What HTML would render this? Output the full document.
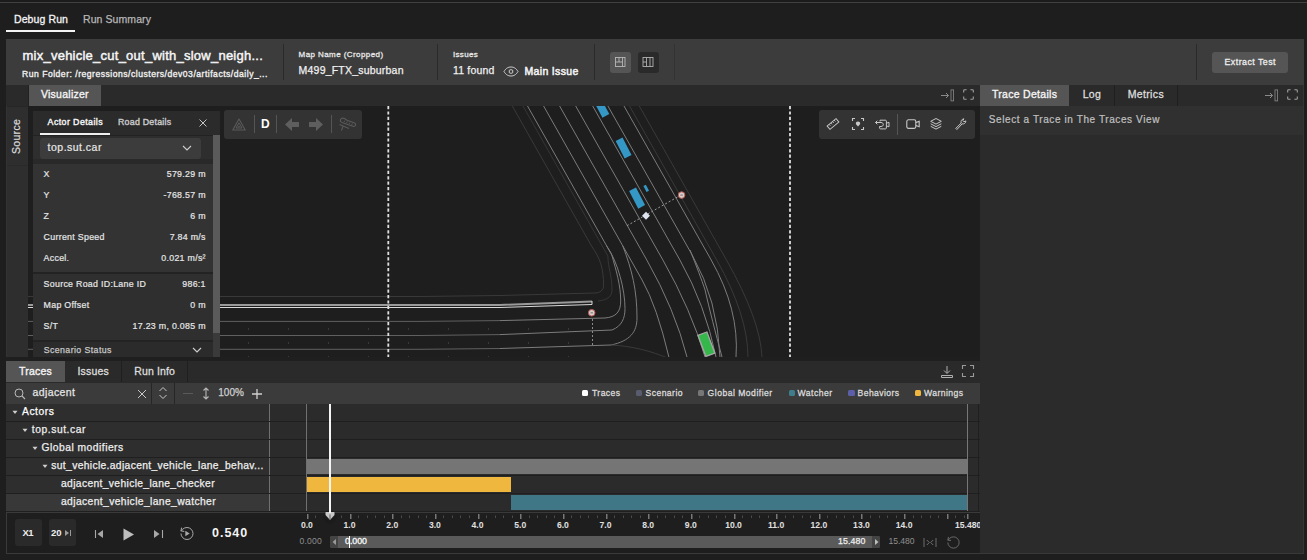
<!DOCTYPE html>
<html><head><meta charset="utf-8"><style>
html,body{margin:0;padding:0;width:1307px;height:560px;overflow:hidden;background:#1e1e1e;}
body{position:relative;font-family:"Liberation Sans",sans-serif;}
div{position:absolute;box-sizing:border-box;}
.t{white-space:nowrap;}
svg{position:absolute;overflow:visible;}
</style></head><body>
<div style="left:0px;top:0px;width:1307px;height:2px;background:#1c1c1c;"></div>
<div style="left:0px;top:2px;width:1307px;height:1px;background:#404040;"></div>
<div class="t" style="left:14px;top:14.11px;font-size:10.5px;line-height:10.5px;color:#f4f4f4;font-weight:400;letter-spacing:0.098px;-webkit-text-stroke:0.3px #f4f4f4;">Debug Run</div>
<div class="t" style="left:83px;top:14.11px;font-size:10.5px;line-height:10.5px;color:#b8b8b8;font-weight:400;letter-spacing:0.082px;-webkit-text-stroke:0.25px #b8b8b8;">Run Summary</div>
<div style="left:6px;top:30px;width:69px;height:1.5px;background:#f4f4f4;"></div>
<div style="left:6px;top:39px;width:1298px;height:46px;background:#3c3c3c;"></div>
<div class="t" style="left:22.5px;top:48.99px;font-size:13px;line-height:13px;color:#f6f6f6;font-weight:400;letter-spacing:0.244px;-webkit-text-stroke:0.45px #f6f6f6;">mix_vehicle_cut_out_with_slow_neigh...</div>
<div class="t" style="left:22px;top:69.52px;font-size:8.6px;line-height:8.6px;color:#f0f0f0;font-weight:400;letter-spacing:0.500px;-webkit-text-stroke:0.35px #f0f0f0;">Run Folder: /regressions/clusters/dev03/artifacts/daily_...</div>
<div style="left:283px;top:44px;width:1px;height:36px;background:#2a2a2a;"></div>
<div class="t" style="left:298.6px;top:50.53px;font-size:8px;line-height:8px;color:#e6e6e6;font-weight:400;letter-spacing:0.419px;-webkit-text-stroke:0.3px #e6e6e6;">Map Name (Cropped)</div>
<div class="t" style="left:298.6px;top:64.51px;font-size:10.5px;line-height:10.5px;color:#f0f0f0;font-weight:400;letter-spacing:0.208px;-webkit-text-stroke:0.25px #f0f0f0;">M499_FTX_suburban</div>
<div style="left:437px;top:44px;width:1px;height:36px;background:#2a2a2a;"></div>
<div class="t" style="left:453px;top:51.03px;font-size:8px;line-height:8px;color:#e6e6e6;font-weight:400;letter-spacing:0.313px;-webkit-text-stroke:0.3px #e6e6e6;">Issues</div>
<div class="t" style="left:453px;top:65.11px;font-size:10.5px;line-height:10.5px;color:#f0f0f0;font-weight:400;letter-spacing:0.176px;-webkit-text-stroke:0.25px #f0f0f0;">11 found</div>
<div class="t" style="left:524.5px;top:66.01px;font-size:10.5px;line-height:10.5px;color:#f4f4f4;font-weight:400;letter-spacing:0.333px;-webkit-text-stroke:0.5px #f4f4f4;">Main Issue</div>
<div style="left:594px;top:44px;width:1px;height:36px;background:#2a2a2a;"></div>
<div style="left:610px;top:52px;width:21px;height:21px;background:#555555;border-radius:3px;"></div>
<div style="left:638px;top:52px;width:21px;height:21px;background:#2a2a2a;border-radius:3px;"></div>
<div style="left:674px;top:44px;width:1px;height:36px;background:#333333;"></div>
<svg style="left:503px;top:66px" width="16" height="11" viewBox="0 0 16 11"><path d="M1 5.5C3 2 5.5 1 8 1C10.5 1 13 2 15 5.5C13 9 10.5 10 8 10C5.5 10 3 9 1 5.5Z" stroke="#d0d0d0" stroke-width="1" fill="none"/><rect x="6.3" y="3.8" width="3.4" height="3.4" rx="0.8" stroke="#d0d0d0" stroke-width="1" fill="none"/></svg>
<svg style="left:614px;top:57px" width="12" height="11" viewBox="0 0 12 11"><rect x="1.5" y="0.5" width="9.5" height="9" stroke="#b8b8b8" stroke-width="0.9" fill="none"/><path d="M8.5 0.5V9.5M1.5 5H8.5M5 0.5V5" stroke="#b8b8b8" stroke-width="0.9" fill="none"/></svg>
<svg style="left:642px;top:57px" width="12" height="11" viewBox="0 0 12 11"><rect x="1" y="0.5" width="10" height="9" stroke="#b0b0b0" stroke-width="0.9" fill="none"/><path d="M4.5 0.5V9.5M8 0.5V9.5M1 5H4.5" stroke="#b0b0b0" stroke-width="0.9" fill="none"/></svg>
<div style="left:1196px;top:44px;width:1px;height:36px;background:#2a2a2a;"></div>
<div style="left:1212px;top:52px;width:76px;height:21px;background:#555555;border-radius:3px;"></div>
<div class="t" style="left:1224.5px;top:57.55px;font-size:8.8px;line-height:8.8px;color:#eeeeee;font-weight:400;letter-spacing:0.474px;-webkit-text-stroke:0.3px #eeeeee;">Extract Test</div>
<div style="left:6px;top:85px;width:1298px;height:468px;background:#2a2a2a;"></div>
<div style="left:6px;top:106px;width:22px;height:251px;background:#2e2e2e;"></div>
<div style="left:28px;top:85px;width:1px;height:272px;background:#222;"></div>
<div style="left:29px;top:85px;width:72px;height:21px;background:#555555;"></div>
<div class="t" style="left:40.9px;top:89.11px;font-size:10.5px;line-height:10.5px;color:#f4f4f4;font-weight:400;letter-spacing:0.267px;-webkit-text-stroke:0.35px #f4f4f4;">Visualizer</div>
<div style="left:28px;top:106px;width:952px;height:251px;background:#1e1e1e;"></div>
<div style="left:980px;top:85px;width:323px;height:21px;background:#2a2a2a;"></div>
<div style="left:980px;top:85px;width:89px;height:21px;background:#555555;"></div>
<div style="left:1114px;top:85px;width:1px;height:21px;background:#1f1f1f;"></div>
<div style="left:1177px;top:85px;width:1px;height:21px;background:#1f1f1f;"></div>
<div class="t" style="left:992px;top:88.91px;font-size:10.5px;line-height:10.5px;color:#f4f4f4;font-weight:400;letter-spacing:0.288px;-webkit-text-stroke:0.35px #f4f4f4;">Trace Details</div>
<div class="t" style="left:1082.7px;top:88.91px;font-size:10.5px;line-height:10.5px;color:#dddddd;font-weight:400;letter-spacing:0.327px;-webkit-text-stroke:0.3px #dddddd;">Log</div>
<div class="t" style="left:1127.7px;top:88.91px;font-size:10.5px;line-height:10.5px;color:#dddddd;font-weight:400;letter-spacing:0.352px;-webkit-text-stroke:0.3px #dddddd;">Metrics</div>
<div style="left:980px;top:106px;width:323px;height:447px;background:#2b2b2b;"></div>
<div style="left:980px;top:106px;width:323px;height:29px;background:#303030;"></div>
<div class="t" style="left:988.8px;top:114.93px;font-size:10px;line-height:10px;color:#c0c0c0;font-weight:400;letter-spacing:0.601px;-webkit-text-stroke:0.2px #c0c0c0;">Select a Trace in The Traces View</div>
<div style="left:975px;top:106px;width:5px;height:447px;background:#1e1e1e;"></div>
<svg style="left:0;top:0" width="1307" height="560"><defs><clipPath id="mc"><rect x="28" y="106" width="947" height="251"/></clipPath></defs><g clip-path="url(#mc)"><path d="M559.6 106L646.8 260Q675.1 310 687 357" stroke="#7c7c7c" stroke-width="1" fill="none" /><path d="M575.7 106L662.9 260Q691.2 310 705 357" stroke="#7c7c7c" stroke-width="1" fill="none" /><path d="M592.7 106L679.9 260Q705.3 305 716 357" stroke="#7c7c7c" stroke-width="1" fill="none" /><path d="M607.9 106L692.2 255Q717.7 300 720 357" stroke="#7c7c7c" stroke-width="1" fill="none" /><path d="M690 250Q700 275 704.8 289Q712 320 722 357" stroke="#7c7c7c" stroke-width="1" fill="none" /><path d="M624 106L711.2 260Q739.5 310 736 357" stroke="#7c7c7c" stroke-width="1" fill="none" /><path d="M629.5 106L716.7 260Q747.8 315 748 357" stroke="#3c3c3c" stroke-width="0.9" fill="none" /><path d="M639.3 106L726.5 260Q760.4 320 762 357" stroke="#3c3c3c" stroke-width="0.9" fill="none" /><path d="M543.6 106L642.1 280Q656.8 306 668.9 357" stroke="#7c7c7c" stroke-width="1" fill="none" /><path d="M527.5 106L611.8 255C616 270 620.7 285 620.7 301C620.7 312 616 317 605 318L500 320.6" stroke="#7c7c7c" stroke-width="1" fill="none" /><path d="M500 320.6L420 321.4L28 321.4" stroke="#606060" stroke-width="1" fill="none" /><path d="M606.7 246C618 262 625 290 625 308.6C625 318 622 326 612 330L500 334.6" stroke="#7c7c7c" stroke-width="1" fill="none" /><path d="M500 334.6L420 335.5L28 335.5" stroke="#606060" stroke-width="1" fill="none" /><path d="M622.8 246C632 270 637 290 637 318C637 332 630 341 611 345L500 348.5" stroke="#7c7c7c" stroke-width="1" fill="none" /><path d="M500 348.5L420 349.3L28 349.3" stroke="#606060" stroke-width="1" fill="none" /><path d="M512.3 106L591.5 246C600 258 603.6 268 603.6 285.7C603.6 290 600 293 595 293L500 295.5L420 296.5L28 296.5" stroke="#3c3c3c" stroke-width="0.9" fill="none" /><path d="M523 106L607.9 256C608 268 612 275 612 290C612 296 608 300 598 301" stroke="#3c3c3c" stroke-width="0.8" fill="none" /><path d="M611 345C630 346 650 350 672 360" stroke="#3c3c3c" stroke-width="0.9" fill="none" /><path d="M28 305H500L592 301.5" stroke="#9a9a9a" stroke-width="2" fill="none"/><path d="M28 307.5H500L592 304.5V301" stroke="#d8d8d8" stroke-width="1" fill="none"/><rect x="248" y="328.5" width="1" height="1" fill="#555"/><rect x="288" y="328.5" width="1" height="1" fill="#555"/><rect x="328" y="328.5" width="1" height="1" fill="#555"/><rect x="368" y="328.5" width="1" height="1" fill="#555"/><rect x="408" y="328.5" width="1" height="1" fill="#555"/><rect x="448" y="328.5" width="1" height="1" fill="#555"/><rect x="488" y="328.5" width="1" height="1" fill="#555"/><rect x="528" y="328.5" width="1" height="1" fill="#555"/><rect x="568" y="328.5" width="1" height="1" fill="#555"/><rect x="248" y="342.5" width="1" height="1" fill="#555"/><rect x="288" y="342.5" width="1" height="1" fill="#555"/><rect x="328" y="342.5" width="1" height="1" fill="#555"/><rect x="368" y="342.5" width="1" height="1" fill="#555"/><rect x="408" y="342.5" width="1" height="1" fill="#555"/><rect x="448" y="342.5" width="1" height="1" fill="#555"/><rect x="488" y="342.5" width="1" height="1" fill="#555"/><rect x="528" y="342.5" width="1" height="1" fill="#555"/><rect x="568" y="342.5" width="1" height="1" fill="#555"/><rect x="248" y="356.5" width="1" height="1" fill="#555"/><rect x="288" y="356.5" width="1" height="1" fill="#555"/><rect x="328" y="356.5" width="1" height="1" fill="#555"/><rect x="368" y="356.5" width="1" height="1" fill="#555"/><rect x="408" y="356.5" width="1" height="1" fill="#555"/><rect x="448" y="356.5" width="1" height="1" fill="#555"/><rect x="488" y="356.5" width="1" height="1" fill="#555"/><rect x="528" y="356.5" width="1" height="1" fill="#555"/><rect x="568" y="356.5" width="1" height="1" fill="#555"/><path d="M388.3 106V357" stroke="#e0e0e0" stroke-width="1.8" fill="none" stroke-dasharray="3.2 2.2"/><path d="M790 106V357" stroke="#e0e0e0" stroke-width="1.8" fill="none" stroke-dasharray="3.2 2.2"/><path d="M592.5 319V346" stroke="#8a8a8a" stroke-width="1" fill="none" stroke-dasharray="2 2"/><path d="M627 225.7L681 195" stroke="#9a9a9a" stroke-width="1" fill="none" stroke-dasharray="2 2"/><circle cx="681.6" cy="195.1" r="3.3" fill="#d8cccc" stroke="#b5584e" stroke-width="1"/><rect x="680.4" y="194.5" width="2.4" height="1.2" fill="#8a7a7a"/><circle cx="591.7" cy="312.8" r="3.3" fill="#d8cccc" stroke="#b5584e" stroke-width="1"/><rect x="590.5" y="312.2" width="2.4" height="1.2" fill="#8a7a7a"/><rect x="643.2" y="212.9" width="5.6" height="5.6" fill="#dfe5f0" transform="rotate(45 646 215.7)"/><rect x="597.45" y="97.55" width="7.7" height="19.5" fill="#3597c6" transform="rotate(-28 601.3 107.3)"/><rect x="619.75" y="138.25" width="7.7" height="19.5" fill="#3597c6" transform="rotate(-27.4 623.6 148)"/><rect x="633.25" y="188.20" width="7.7" height="19.8" fill="#3597c6" transform="rotate(-27.4 637.1 198.1)"/><rect x="644.80" y="185.00" width="2.8" height="6.8" fill="#3597c6" transform="rotate(-27.4 646.2 188.4)"/><rect x="701.60" y="332.95" width="9.6" height="22.5" fill="#35b74b" stroke="#a8a8a8" stroke-width="1.3" transform="rotate(-20.7 706.4 344.2)"/></g></svg>
<div class="t" style="left:2px;top:134px;width:28px;height:12px;transform:rotate(-90deg);font-size:10.5px;line-height:12px;color:#d6d6d6;text-align:center;letter-spacing:0.3px;-webkit-text-stroke:0.25px #d6d6d6;">Source</div>
<div style="left:6px;top:106px;width:22px;height:1px;background:#262626;"></div>
<div style="left:6px;top:165px;width:22px;height:1px;background:#292929;"></div>
<div style="left:6px;top:106px;width:1px;height:251px;background:#333333;"></div>
<div style="left:33px;top:111px;width:187px;height:246px;background:#2c2c2c;"></div>
<div style="left:33px;top:111px;width:187px;height:24px;background:#2b2b2b;"></div>
<div style="left:33px;top:135px;width:180px;height:1px;background:#222222;"></div>
<div class="t" style="left:47.6px;top:117.55px;font-size:8.8px;line-height:8.8px;color:#f4f4f4;font-weight:400;letter-spacing:0.424px;-webkit-text-stroke:0.4px #f4f4f4;">Actor Details</div>
<div class="t" style="left:118px;top:117.55px;font-size:8.8px;line-height:8.8px;color:#c8c8c8;font-weight:400;letter-spacing:0.252px;-webkit-text-stroke:0.4px #c8c8c8;">Road Details</div>
<div style="left:40px;top:133px;width:70px;height:2px;background:#f0f0f0;"></div>
<svg style="left:198px;top:118px" width="10" height="10" viewBox="0 0 10 10"><path d="M1.5 1.5L8.5 8.5M8.5 1.5L1.5 8.5" stroke="#c4c4c4" stroke-width="1" fill="none"/></svg>
<div style="left:213px;top:135px;width:7px;height:222px;background:#3a3a3a;"></div>
<div style="left:213px;top:135px;width:7px;height:198px;background:#5a5a5a;"></div>
<div style="left:33px;top:136px;width:180px;height:23px;background:#2e2e2e;"></div>
<div style="left:40px;top:138px;width:161px;height:21px;background:#3c3c3c;border-radius:3px;"></div>
<div class="t" style="left:47.6px;top:141.81px;font-size:10.5px;line-height:10.5px;color:#e8e8e8;font-weight:400;letter-spacing:0.480px;-webkit-text-stroke:0.2px #e8e8e8;">top.sut.car</div>
<svg style="left:182px;top:145px" width="10" height="6" viewBox="0 0 10 6"><path d="M1 1L5 5L9 1" stroke="#cfcfcf" stroke-width="1.1" fill="none"/></svg>
<div style="left:33px;top:159px;width:180px;height:5px;background:#292929;"></div>
<div style="left:33px;top:164px;width:180px;height:109px;background:#333333;"></div>
<div style="left:33px;top:272px;width:180px;height:2px;background:#232323;"></div>
<div style="left:33px;top:274px;width:180px;height:66px;background:#2f2f2f;"></div>
<div style="left:33px;top:340px;width:180px;height:2px;background:#232323;"></div>
<div style="left:33px;top:342px;width:180px;height:15px;background:#2b2b2b;"></div>
<div class="t" style="left:43.6px;top:169.55px;font-size:8.8px;line-height:8.8px;color:#e6e6e6;font-weight:400;letter-spacing:0.000px;letter-spacing:0.3px;-webkit-text-stroke:0.2px #e6e6e6;">X</div>
<div class="t" style="right:1101.2px;top:169.55px;font-size:8.8px;line-height:8.8px;color:#e6e6e6;font-weight:400;letter-spacing:0.000px;letter-spacing:0.3px;-webkit-text-stroke:0.2px #e6e6e6;">579.29 m</div>
<div class="t" style="left:43.6px;top:190.55px;font-size:8.8px;line-height:8.8px;color:#e6e6e6;font-weight:400;letter-spacing:0.000px;letter-spacing:0.3px;-webkit-text-stroke:0.2px #e6e6e6;">Y</div>
<div class="t" style="right:1101.2px;top:190.55px;font-size:8.8px;line-height:8.8px;color:#e6e6e6;font-weight:400;letter-spacing:0.000px;letter-spacing:0.3px;-webkit-text-stroke:0.2px #e6e6e6;">-768.57 m</div>
<div class="t" style="left:43.6px;top:211.55px;font-size:8.8px;line-height:8.8px;color:#e6e6e6;font-weight:400;letter-spacing:0.000px;letter-spacing:0.3px;-webkit-text-stroke:0.2px #e6e6e6;">Z</div>
<div class="t" style="right:1101.2px;top:211.55px;font-size:8.8px;line-height:8.8px;color:#e6e6e6;font-weight:400;letter-spacing:0.000px;letter-spacing:0.3px;-webkit-text-stroke:0.2px #e6e6e6;">6 m</div>
<div class="t" style="left:43.6px;top:232.55px;font-size:8.8px;line-height:8.8px;color:#e6e6e6;font-weight:400;letter-spacing:0.000px;letter-spacing:0.3px;-webkit-text-stroke:0.2px #e6e6e6;">Current Speed</div>
<div class="t" style="right:1101.2px;top:232.55px;font-size:8.8px;line-height:8.8px;color:#e6e6e6;font-weight:400;letter-spacing:0.000px;letter-spacing:0.3px;-webkit-text-stroke:0.2px #e6e6e6;">7.84 m/s</div>
<div class="t" style="left:43.6px;top:253.55px;font-size:8.8px;line-height:8.8px;color:#e6e6e6;font-weight:400;letter-spacing:0.000px;letter-spacing:0.3px;-webkit-text-stroke:0.2px #e6e6e6;">Accel.</div>
<div class="t" style="right:1101.2px;top:253.55px;font-size:8.8px;line-height:8.8px;color:#e6e6e6;font-weight:400;letter-spacing:0.000px;letter-spacing:0.3px;-webkit-text-stroke:0.2px #e6e6e6;">0.021 m/s²</div>
<div class="t" style="left:43.6px;top:279.55px;font-size:8.8px;line-height:8.8px;color:#e6e6e6;font-weight:400;letter-spacing:0.000px;letter-spacing:0.3px;-webkit-text-stroke:0.2px #e6e6e6;">Source Road ID:Lane ID</div>
<div class="t" style="right:1101.2px;top:279.55px;font-size:8.8px;line-height:8.8px;color:#e6e6e6;font-weight:400;letter-spacing:0.000px;letter-spacing:0.3px;-webkit-text-stroke:0.2px #e6e6e6;">986:1</div>
<div class="t" style="left:43.6px;top:300.55px;font-size:8.8px;line-height:8.8px;color:#e6e6e6;font-weight:400;letter-spacing:0.000px;letter-spacing:0.3px;-webkit-text-stroke:0.2px #e6e6e6;">Map Offset</div>
<div class="t" style="right:1101.2px;top:300.55px;font-size:8.8px;line-height:8.8px;color:#e6e6e6;font-weight:400;letter-spacing:0.000px;letter-spacing:0.3px;-webkit-text-stroke:0.2px #e6e6e6;">0 m</div>
<div class="t" style="left:43.6px;top:321.85px;font-size:8.8px;line-height:8.8px;color:#e6e6e6;font-weight:400;letter-spacing:0.000px;letter-spacing:0.3px;-webkit-text-stroke:0.2px #e6e6e6;">S/T</div>
<div class="t" style="right:1101.2px;top:321.85px;font-size:8.8px;line-height:8.8px;color:#e6e6e6;font-weight:400;letter-spacing:0.000px;letter-spacing:0.3px;-webkit-text-stroke:0.2px #e6e6e6;">17.23 m, 0.085 m</div>
<div class="t" style="left:43.7px;top:345.55px;font-size:8.8px;line-height:8.8px;color:#c8c8c8;font-weight:400;letter-spacing:0.405px;-webkit-text-stroke:0.25px #c8c8c8;">Scenario Status</div>
<svg style="left:192px;top:347px" width="10" height="6" viewBox="0 0 10 6"><path d="M1 1L5 5L9 1" stroke="#cfcfcf" stroke-width="1.1" fill="none"/></svg>
<div style="left:224px;top:110px;width:138px;height:29px;background:#333333;border-radius:3px;"></div>
<svg style="left:231px;top:117px" width="16" height="15" viewBox="0 0 16 15"><path d="M8 2L14.2 13H1.8Z" stroke="#5a5a5a" stroke-width="1.1" fill="none" stroke-linejoin="round"/><path d="M8 5.8L11 11H5Z" stroke="#5a5a5a" stroke-width="1" fill="none"/><path d="M8 8.2L9.2 10.2H6.8Z" fill="#5a5a5a"/></svg>
<div style="left:254px;top:115px;width:1px;height:18px;background:#555;"></div>
<div class="t" style="left:260.9px;top:118.34px;font-size:12px;line-height:12px;color:#ffffff;font-weight:700;letter-spacing:0.000px;">D</div>
<div style="left:276px;top:115px;width:1px;height:18px;background:#555;"></div>
<svg style="left:284px;top:117px" width="40" height="15" viewBox="0 0 40 15"><path d="M1 7.5L8 1V5H15V10H8V14Z" fill="#5e5e5e"/><path d="M39 7.5L32 1V5H25V10H32V14Z" fill="#5e5e5e"/></svg>
<div style="left:331px;top:115px;width:1px;height:18px;background:#555;"></div>
<svg style="left:338px;top:116px" width="20" height="17" viewBox="0 0 20 17"><path d="M2.5 3.5C3.5 2 5 1.8 6.5 2.6L9 4.2L15.5 6.5C17.5 7.2 18 8.5 17.5 9.5C17 10.3 15.5 10.5 14 10L4 6.5C2.8 6 2 5 2.5 3.5Z" stroke="#5a5a5a" stroke-width="1.1" fill="none"/><path d="M7 4.5L6 6M9.5 5.5L8.5 7M12 6.5L11 8M14.5 7.5L13.5 9" stroke="#5a5a5a" stroke-width="0.9"/><path d="M1.5 8.5L11 12.5M5 10L3.5 14.5" stroke="#5a5a5a" stroke-width="1.1" fill="none"/></svg>
<div style="left:819px;top:110px;width:156px;height:29px;background:#333333;border-radius:3px;"></div>
<div style="left:897px;top:114px;width:1px;height:21px;background:#555;"></div>
<svg style="left:826px;top:117px" width="14" height="14" viewBox="0 0 14 14"><g transform="rotate(-40 7 7)"><rect x="1.2" y="4.8" width="11.6" height="4.4" stroke="#c8c8c8" stroke-width="1" fill="none"/><path d="M3.8 4.8V6.6M6 4.8V6.6M8.2 4.8V6.6M10.4 4.8V6.6" stroke="#c8c8c8" stroke-width="0.9"/></g></svg>
<svg style="left:851px;top:117px" width="14" height="14" viewBox="0 0 14 14"><path d="M1.5 4V1.5H4M10 1.5H12.5V4M12.5 10V12.5H10M4 12.5H1.5V10" stroke="#c8c8c8" stroke-width="1.1" fill="none"/><path d="M7 4.6C8.3 4.6 9.2 5.5 9.2 6.6C9.2 7.8 7.8 8.6 7 9.4C6.2 8.6 4.8 7.8 4.8 6.6C4.8 5.5 5.7 4.6 7 4.6Z" fill="#c8c8c8"/></svg>
<svg style="left:874px;top:117px" width="16" height="14" viewBox="0 0 16 14"><path d="M6 4.5V3.2H11.5C12 3.2 12.4 3.6 12.4 4.1V11C12.4 11.5 12 11.9 11.5 11.9H6.5C6 11.9 5.6 11.5 5.6 11V9.5" stroke="#c8c8c8" stroke-width="1" fill="none"/><path d="M12.4 6.2L15 5.3V9.8L12.4 8.9" stroke="#c8c8c8" stroke-width="1" fill="none"/><path d="M1.5 5.5H7C8.5 5.5 9.3 6.4 9.3 7.5C9.3 8.6 8.5 9.5 7 9.5H5.5M3.3 3.7L1.5 5.5L3.3 7.3" stroke="#c8c8c8" stroke-width="1" fill="none"/></svg>
<svg style="left:905px;top:117px" width="16" height="14" viewBox="0 0 16 14"><rect x="1.8" y="2.8" width="9" height="8.6" rx="1.6" stroke="#c8c8c8" stroke-width="1.1" fill="none"/><path d="M10.8 5.6L14.2 4.4V9.8L10.8 8.6" stroke="#c8c8c8" stroke-width="1.1" fill="none"/></svg>
<svg style="left:929px;top:117px" width="14" height="14" viewBox="0 0 14 14"><path d="M7 1.5L12.3 4.3L7 7.1L1.7 4.3Z" stroke="#c8c8c8" stroke-width="1" fill="none"/><path d="M1.7 6.8L7 9.6L12.3 6.8M1.7 9.3L7 12.1L12.3 9.3" stroke="#c8c8c8" stroke-width="1" fill="none"/></svg>
<svg style="left:954px;top:117px" width="14" height="14" viewBox="0 0 14 14"><path d="M1.8 11.4L7.2 6C6.6 4.3 7.6 2 9.9 1.8L8.8 3.6L9.9 4.8L11.9 3.9C11.9 6 10.1 7.3 8.1 6.9L2.9 12.5Z" stroke="#c8c8c8" stroke-width="1" fill="none" stroke-linejoin="round"/></svg>
<svg style="left:940px;top:89px" width="14" height="13" viewBox="0 0 14 13"><path d="M1 6.5H8.5M6 4L8.5 6.5L6 9" stroke="#8a8a8a" stroke-width="1" fill="none"/><rect x="11" y="0.9" width="2.6" height="11" stroke="#8a8a8a" stroke-width="0.8" fill="none"/></svg>
<svg style="left:963px;top:89px" width="12" height="12" viewBox="0 0 12 12"><path d="M0.7 3.6V1.6Q0.7 0.7 1.6 0.7H3.6M7.4 0.7H9.4Q10.3 0.7 10.3 1.6V3.6M10.3 7.4V9.4Q10.3 10.3 9.4 10.3H7.4M3.6 10.3H1.6Q0.7 10.3 0.7 9.4V7.4" stroke="#a0a0a0" stroke-width="1.1" fill="none"/></svg>
<svg style="left:1264px;top:89px" width="14" height="13" viewBox="0 0 14 13"><path d="M1 6.5H8.5M6 4L8.5 6.5L6 9" stroke="#8a8a8a" stroke-width="1" fill="none"/><rect x="11" y="0.9" width="2.6" height="11" stroke="#8a8a8a" stroke-width="0.8" fill="none"/></svg>
<svg style="left:1287px;top:89px" width="12" height="12" viewBox="0 0 12 12"><path d="M0.7 3.6V1.6Q0.7 0.7 1.6 0.7H3.6M7.4 0.7H9.4Q10.3 0.7 10.3 1.6V3.6M10.3 7.4V9.4Q10.3 10.3 9.4 10.3H7.4M3.6 10.3H1.6Q0.7 10.3 0.7 9.4V7.4" stroke="#a0a0a0" stroke-width="1.1" fill="none"/></svg>
<div style="left:6px;top:357px;width:974px;height:4px;background:#1f1f1f;"></div>
<div style="left:6px;top:361px;width:1px;height:192px;background:#353535;"></div>
<div style="left:6px;top:361px;width:974px;height:22px;background:#2a2a2a;"></div>
<div style="left:6px;top:361px;width:59px;height:21px;background:#555555;"></div>
<div style="left:121px;top:361px;width:1px;height:21px;background:#1f1f1f;"></div>
<div style="left:187px;top:361px;width:1px;height:21px;background:#1f1f1f;"></div>
<div class="t" style="left:19px;top:366.11px;font-size:10.5px;line-height:10.5px;color:#f4f4f4;font-weight:400;letter-spacing:0.217px;-webkit-text-stroke:0.35px #f4f4f4;">Traces</div>
<div class="t" style="left:77.4px;top:366.11px;font-size:10.5px;line-height:10.5px;color:#dddddd;font-weight:400;letter-spacing:0.209px;-webkit-text-stroke:0.3px #dddddd;">Issues</div>
<div class="t" style="left:134.2px;top:366.11px;font-size:10.5px;line-height:10.5px;color:#dddddd;font-weight:400;letter-spacing:0.138px;-webkit-text-stroke:0.3px #dddddd;">Run Info</div>
<svg style="left:940px;top:365px" width="14" height="13" viewBox="0 0 14 13"><path d="M7 1V8M4 5.5L7 8.5L10 5.5M1.5 10.5H12.5V12.5H1.5Z" stroke="#b0b0b0" stroke-width="1" fill="none"/></svg>
<svg style="left:962px;top:365px" width="12" height="12" viewBox="0 0 12 12"><path d="M0.5 4V0.5H4M8 0.5H11.5V4M11.5 8V11.5H8M4 11.5H0.5V8" stroke="#9a9a9a" stroke-width="1.1" fill="none"/></svg>
<div style="left:6px;top:383px;width:974px;height:21px;background:#3b3b3b;"></div>
<div style="left:151px;top:383px;width:1px;height:21px;background:#262626;"></div>
<div style="left:174px;top:383px;width:1px;height:21px;background:#262626;"></div>
<svg style="left:14px;top:388px" width="12" height="12" viewBox="0 0 12 12"><circle cx="5" cy="5" r="4" stroke="#b8b8b8" stroke-width="1" fill="none"/><path d="M8 8L11 11" stroke="#b8b8b8" stroke-width="1.1"/></svg>
<div class="t" style="left:32.6px;top:387.11px;font-size:10.5px;line-height:10.5px;color:#e6e6e6;font-weight:400;letter-spacing:0.375px;-webkit-text-stroke:0.25px #e6e6e6;">adjacent</div>
<svg style="left:137px;top:389px" width="10" height="10" viewBox="0 0 10 10"><path d="M1 1L9 9M9 1L1 9" stroke="#c8c8c8" stroke-width="1" fill="none"/></svg>
<svg style="left:158px;top:386px" width="10" height="14" viewBox="0 0 10 14"><path d="M1.5 5L5 1.5L8.5 5M1.5 9L5 12.5L8.5 9" stroke="#c8c8c8" stroke-width="1" fill="none"/></svg>
<div style="left:183px;top:393px;width:10px;height:1px;background:#5a5a5a;"></div>
<svg style="left:202px;top:387px" width="8" height="13" viewBox="0 0 8 13"><path d="M4 1V12M1.5 3.5L4 1L6.5 3.5M1.5 9.5L4 12L6.5 9.5" stroke="#b8b8b8" stroke-width="1.1" fill="none"/></svg>
<div class="t" style="left:218.2px;top:387.53px;font-size:10px;line-height:10px;color:#cfcfcf;font-weight:400;letter-spacing:0.056px;-webkit-text-stroke:0.25px #cfcfcf;">100%</div>
<svg style="left:251px;top:388px" width="12" height="12" viewBox="0 0 12 12"><path d="M6 1V11M1 6H11" stroke="#d0d0d0" stroke-width="1.3"/></svg>
<div style="left:582px;top:389.6px;width:6.3px;height:6.3px;background:#ffffff;border-radius:1.5px;"></div>
<div class="t" style="left:592px;top:389.02px;font-size:8.6px;line-height:8.6px;color:#dadada;font-weight:400;letter-spacing:0.423px;-webkit-text-stroke:0.3px #dadada;">Traces</div>
<div style="left:636px;top:389.6px;width:6.3px;height:6.3px;background:#585c6e;border-radius:1.5px;"></div>
<div class="t" style="left:645.5px;top:389.02px;font-size:8.6px;line-height:8.6px;color:#dadada;font-weight:400;letter-spacing:0.445px;-webkit-text-stroke:0.3px #dadada;">Scenario</div>
<div style="left:698px;top:389.6px;width:6.3px;height:6.3px;background:#777777;border-radius:1.5px;"></div>
<div class="t" style="left:707.6px;top:389.02px;font-size:8.6px;line-height:8.6px;color:#dadada;font-weight:400;letter-spacing:0.484px;-webkit-text-stroke:0.3px #dadada;">Global Modifier</div>
<div style="left:788.5px;top:389.6px;width:6.3px;height:6.3px;background:#3f7d8c;border-radius:1.5px;"></div>
<div class="t" style="left:797.5px;top:389.02px;font-size:8.6px;line-height:8.6px;color:#dadada;font-weight:400;letter-spacing:0.486px;-webkit-text-stroke:0.3px #dadada;">Watcher</div>
<div style="left:848.3px;top:389.6px;width:6.3px;height:6.3px;background:#5c5fa8;border-radius:1.5px;"></div>
<div class="t" style="left:857.6px;top:389.02px;font-size:8.6px;line-height:8.6px;color:#dadada;font-weight:400;letter-spacing:0.406px;-webkit-text-stroke:0.3px #dadada;">Behaviors</div>
<div style="left:914.8px;top:389.6px;width:6.3px;height:6.3px;background:#f0b73e;border-radius:1.5px;"></div>
<div class="t" style="left:924px;top:389.02px;font-size:8.6px;line-height:8.6px;color:#dadada;font-weight:400;letter-spacing:0.449px;-webkit-text-stroke:0.3px #dadada;">Warnings</div>
<div style="left:6px;top:404px;width:264px;height:17px;background:#2e2e2e;"></div>
<div style="left:270px;top:404px;width:37px;height:17px;background:#2b2b2b;"></div>
<div style="left:307px;top:404px;width:660px;height:17px;background:#2b2b2b;"></div>
<div style="left:967px;top:404px;width:13px;height:17px;background:#2b2b2b;"></div>
<div style="left:269px;top:404px;width:1px;height:17px;background:#707070;"></div>
<div style="left:6px;top:421px;width:974px;height:1px;background:#1f1f1f;"></div>
<div class="t" style="left:22px;top:407.08px;font-size:10.3px;line-height:10.3px;color:#ffffff;font-weight:400;letter-spacing:0.552px;-webkit-text-stroke:0.25px #ffffff;">Actors</div>
<svg style="left:12px;top:410px" width="6" height="5" viewBox="0 0 6 5"><path d="M0.5 0.8H5.5L3 4Z" fill="#cfcfcf"/></svg>
<div style="left:6px;top:422px;width:264px;height:17px;background:#2e2e2e;"></div>
<div style="left:270px;top:422px;width:37px;height:17px;background:#2b2b2b;"></div>
<div style="left:307px;top:422px;width:660px;height:17px;background:#2b2b2b;"></div>
<div style="left:967px;top:422px;width:13px;height:17px;background:#2b2b2b;"></div>
<div style="left:269px;top:422px;width:1px;height:17px;background:#707070;"></div>
<div style="left:6px;top:439px;width:974px;height:1px;background:#1f1f1f;"></div>
<div class="t" style="left:31.8px;top:425.08px;font-size:10.3px;line-height:10.3px;color:#eeeeee;font-weight:400;letter-spacing:0.555px;-webkit-text-stroke:0.25px #eeeeee;">top.sut.car</div>
<svg style="left:22px;top:428px" width="6" height="5" viewBox="0 0 6 5"><path d="M0.5 0.8H5.5L3 4Z" fill="#cfcfcf"/></svg>
<div style="left:6px;top:440px;width:264px;height:17px;background:#2e2e2e;"></div>
<div style="left:270px;top:440px;width:37px;height:17px;background:#2b2b2b;"></div>
<div style="left:307px;top:440px;width:660px;height:17px;background:#2b2b2b;"></div>
<div style="left:967px;top:440px;width:13px;height:17px;background:#2b2b2b;"></div>
<div style="left:269px;top:440px;width:1px;height:17px;background:#707070;"></div>
<div style="left:6px;top:457px;width:974px;height:1px;background:#1f1f1f;"></div>
<div class="t" style="left:41.5px;top:443.08px;font-size:10.3px;line-height:10.3px;color:#eeeeee;font-weight:400;letter-spacing:0.486px;-webkit-text-stroke:0.25px #eeeeee;">Global modifiers</div>
<svg style="left:32px;top:446px" width="6" height="5" viewBox="0 0 6 5"><path d="M0.5 0.8H5.5L3 4Z" fill="#cfcfcf"/></svg>
<div style="left:6px;top:458px;width:264px;height:17px;background:#2e2e2e;"></div>
<div style="left:270px;top:458px;width:37px;height:17px;background:#2b2b2b;"></div>
<div style="left:307px;top:458px;width:660px;height:17px;background:#2b2b2b;"></div>
<div style="left:967px;top:458px;width:13px;height:17px;background:#2b2b2b;"></div>
<div style="left:269px;top:458px;width:1px;height:17px;background:#707070;"></div>
<div style="left:6px;top:475px;width:974px;height:1px;background:#1f1f1f;"></div>
<div class="t" style="left:51.3px;top:461.08px;font-size:10.3px;line-height:10.3px;color:#eeeeee;font-weight:400;letter-spacing:0.344px;-webkit-text-stroke:0.25px #eeeeee;">sut_vehicle.adjacent_vehicle_lane_behav...</div>
<svg style="left:42px;top:464px" width="6" height="5" viewBox="0 0 6 5"><path d="M0.5 0.8H5.5L3 4Z" fill="#cfcfcf"/></svg>
<div style="left:6px;top:476px;width:264px;height:17px;background:#2e2e2e;"></div>
<div style="left:270px;top:476px;width:37px;height:17px;background:#2b2b2b;"></div>
<div style="left:307px;top:476px;width:660px;height:17px;background:#2b2b2b;"></div>
<div style="left:967px;top:476px;width:13px;height:17px;background:#2b2b2b;"></div>
<div style="left:269px;top:476px;width:1px;height:17px;background:#707070;"></div>
<div style="left:6px;top:493px;width:974px;height:1px;background:#1f1f1f;"></div>
<div class="t" style="left:61px;top:479.08px;font-size:10.3px;line-height:10.3px;color:#eeeeee;font-weight:400;letter-spacing:0.354px;-webkit-text-stroke:0.25px #eeeeee;">adjacent_vehicle_lane_checker</div>
<div style="left:6px;top:494px;width:264px;height:17px;background:#383838;"></div>
<div style="left:270px;top:494px;width:37px;height:17px;background:#2b2b2b;"></div>
<div style="left:307px;top:494px;width:660px;height:17px;background:#2b2b2b;"></div>
<div style="left:967px;top:494px;width:13px;height:17px;background:#2b2b2b;"></div>
<div style="left:269px;top:494px;width:1px;height:17px;background:#707070;"></div>
<div style="left:6px;top:511px;width:974px;height:1px;background:#1f1f1f;"></div>
<div class="t" style="left:61px;top:497.08px;font-size:10.3px;line-height:10.3px;color:#eeeeee;font-weight:400;letter-spacing:0.389px;-webkit-text-stroke:0.25px #eeeeee;">adjacent_vehicle_lane_watcher</div>
<div style="left:306px;top:404px;width:1px;height:115px;background:#707070;"></div>
<div style="left:967px;top:404px;width:1px;height:115px;background:#777;"></div>
<div style="left:978px;top:404px;width:1px;height:108px;background:#1f1f1f;"></div>
<div style="left:307px;top:459px;width:660px;height:15px;background:#757575;"></div>
<div style="left:307px;top:477px;width:204px;height:15px;background:#f0b73e;"></div>
<div style="left:511px;top:495px;width:456px;height:15px;background:#3f7786;"></div>
<div style="left:6px;top:511px;width:974px;height:1px;background:#1f1f1f;"></div>
<div style="left:6px;top:512px;width:974px;height:41px;background:#1e1e1e;"></div>
<div style="left:6px;top:512px;width:974px;height:1px;background:#3a3a3a;"></div>
<div style="left:6px;top:512px;width:1px;height:41px;background:#3a3a3a;"></div>
<div style="left:6px;top:553px;width:974px;height:1px;background:#3a3a3a;"></div>
<div style="left:15px;top:519px;width:27px;height:27px;background:#2a2a2a;border-radius:3px;"></div>
<div style="left:49px;top:519px;width:27px;height:27px;background:#2a2a2a;border-radius:3px;"></div>
<div class="t" style="left:22.5px;top:527.96px;font-size:9.5px;line-height:9.5px;color:#eeeeee;font-weight:700;letter-spacing:-0.710px;">X1</div>
<div class="t" style="left:50.9px;top:527.96px;font-size:9.5px;line-height:9.5px;color:#eeeeee;font-weight:700;letter-spacing:0.067px;">20</div>
<svg style="left:64px;top:529px" width="8" height="8" viewBox="0 0 8 8"><path d="M1 1L5 4L1 7Z" fill="#9a9a9a"/><path d="M6.5 1V7" stroke="#9a9a9a" stroke-width="1"/></svg>
<svg style="left:94px;top:529px" width="10" height="10" viewBox="0 0 10 10"><path d="M9 1L3.5 5L9 9Z" fill="#a8a8a8"/><path d="M1.5 1V9" stroke="#a8a8a8" stroke-width="1.1"/></svg>
<svg style="left:122px;top:528px" width="13" height="13" viewBox="0 0 13 13"><path d="M1.5 0.5L12 6.5L1.5 12.5Z" fill="#bdbdbd"/></svg>
<svg style="left:153px;top:529px" width="11" height="10" viewBox="0 0 11 10"><path d="M1 1L6.5 5L1 9Z" fill="#a8a8a8"/><path d="M9.5 1V9" stroke="#a8a8a8" stroke-width="1.1"/></svg>
<svg style="left:179px;top:525px" width="16" height="17" viewBox="0 0 24 24"><path d="M3 12a9 9 0 1 0 9-9 9.75 9.75 0 0 0-6.74 2.74L3 8" stroke="#a8a8a8" stroke-width="1.5" fill="none"/><path d="M3 3v5h5" stroke="#a8a8a8" stroke-width="1.5" fill="none" transform="rotate(10 3 8)"/><path d="M9.5 8L16 12L9.5 16Z" fill="#a8a8a8"/></svg>
<div class="t" style="left:212px;top:526.72px;font-size:12.5px;line-height:12.5px;color:#f4f4f4;font-weight:700;letter-spacing:0.984px;">0.540</div>
<svg style="left:0;top:0" width="1307" height="560"><rect x="307" y="514" width="1.5" height="5" fill="#777"/><rect x="315" y="515.5" width="1" height="2.5" fill="#4a4a4a"/><rect x="324" y="515.5" width="1" height="2.5" fill="#4a4a4a"/><rect x="332" y="515.5" width="1" height="2.5" fill="#4a4a4a"/><rect x="341" y="515.5" width="1" height="2.5" fill="#4a4a4a"/><rect x="350" y="514" width="1.5" height="5" fill="#777"/><rect x="358" y="515.5" width="1" height="2.5" fill="#4a4a4a"/><rect x="367" y="515.5" width="1" height="2.5" fill="#4a4a4a"/><rect x="375" y="515.5" width="1" height="2.5" fill="#4a4a4a"/><rect x="384" y="515.5" width="1" height="2.5" fill="#4a4a4a"/><rect x="392" y="514" width="1.5" height="5" fill="#777"/><rect x="401" y="515.5" width="1" height="2.5" fill="#4a4a4a"/><rect x="409" y="515.5" width="1" height="2.5" fill="#4a4a4a"/><rect x="418" y="515.5" width="1" height="2.5" fill="#4a4a4a"/><rect x="426" y="515.5" width="1" height="2.5" fill="#4a4a4a"/><rect x="435" y="514" width="1.5" height="5" fill="#777"/><rect x="443" y="515.5" width="1" height="2.5" fill="#4a4a4a"/><rect x="452" y="515.5" width="1" height="2.5" fill="#4a4a4a"/><rect x="460" y="515.5" width="1" height="2.5" fill="#4a4a4a"/><rect x="469" y="515.5" width="1" height="2.5" fill="#4a4a4a"/><rect x="478" y="514" width="1.5" height="5" fill="#777"/><rect x="486" y="515.5" width="1" height="2.5" fill="#4a4a4a"/><rect x="495" y="515.5" width="1" height="2.5" fill="#4a4a4a"/><rect x="503" y="515.5" width="1" height="2.5" fill="#4a4a4a"/><rect x="512" y="515.5" width="1" height="2.5" fill="#4a4a4a"/><rect x="520" y="514" width="1.5" height="5" fill="#777"/><rect x="529" y="515.5" width="1" height="2.5" fill="#4a4a4a"/><rect x="537" y="515.5" width="1" height="2.5" fill="#4a4a4a"/><rect x="546" y="515.5" width="1" height="2.5" fill="#4a4a4a"/><rect x="554" y="515.5" width="1" height="2.5" fill="#4a4a4a"/><rect x="563" y="514" width="1.5" height="5" fill="#777"/><rect x="571" y="515.5" width="1" height="2.5" fill="#4a4a4a"/><rect x="580" y="515.5" width="1" height="2.5" fill="#4a4a4a"/><rect x="588" y="515.5" width="1" height="2.5" fill="#4a4a4a"/><rect x="597" y="515.5" width="1" height="2.5" fill="#4a4a4a"/><rect x="606" y="514" width="1.5" height="5" fill="#777"/><rect x="614" y="515.5" width="1" height="2.5" fill="#4a4a4a"/><rect x="623" y="515.5" width="1" height="2.5" fill="#4a4a4a"/><rect x="631" y="515.5" width="1" height="2.5" fill="#4a4a4a"/><rect x="640" y="515.5" width="1" height="2.5" fill="#4a4a4a"/><rect x="648" y="514" width="1.5" height="5" fill="#777"/><rect x="657" y="515.5" width="1" height="2.5" fill="#4a4a4a"/><rect x="665" y="515.5" width="1" height="2.5" fill="#4a4a4a"/><rect x="674" y="515.5" width="1" height="2.5" fill="#4a4a4a"/><rect x="682" y="515.5" width="1" height="2.5" fill="#4a4a4a"/><rect x="691" y="514" width="1.5" height="5" fill="#777"/><rect x="699" y="515.5" width="1" height="2.5" fill="#4a4a4a"/><rect x="708" y="515.5" width="1" height="2.5" fill="#4a4a4a"/><rect x="716" y="515.5" width="1" height="2.5" fill="#4a4a4a"/><rect x="725" y="515.5" width="1" height="2.5" fill="#4a4a4a"/><rect x="734" y="514" width="1.5" height="5" fill="#777"/><rect x="742" y="515.5" width="1" height="2.5" fill="#4a4a4a"/><rect x="751" y="515.5" width="1" height="2.5" fill="#4a4a4a"/><rect x="759" y="515.5" width="1" height="2.5" fill="#4a4a4a"/><rect x="768" y="515.5" width="1" height="2.5" fill="#4a4a4a"/><rect x="776" y="514" width="1.5" height="5" fill="#777"/><rect x="785" y="515.5" width="1" height="2.5" fill="#4a4a4a"/><rect x="793" y="515.5" width="1" height="2.5" fill="#4a4a4a"/><rect x="802" y="515.5" width="1" height="2.5" fill="#4a4a4a"/><rect x="810" y="515.5" width="1" height="2.5" fill="#4a4a4a"/><rect x="819" y="514" width="1.5" height="5" fill="#777"/><rect x="827" y="515.5" width="1" height="2.5" fill="#4a4a4a"/><rect x="836" y="515.5" width="1" height="2.5" fill="#4a4a4a"/><rect x="844" y="515.5" width="1" height="2.5" fill="#4a4a4a"/><rect x="853" y="515.5" width="1" height="2.5" fill="#4a4a4a"/><rect x="861" y="514" width="1.5" height="5" fill="#777"/><rect x="870" y="515.5" width="1" height="2.5" fill="#4a4a4a"/><rect x="879" y="515.5" width="1" height="2.5" fill="#4a4a4a"/><rect x="887" y="515.5" width="1" height="2.5" fill="#4a4a4a"/><rect x="896" y="515.5" width="1" height="2.5" fill="#4a4a4a"/><rect x="904" y="514" width="1.5" height="5" fill="#777"/><rect x="913" y="515.5" width="1" height="2.5" fill="#4a4a4a"/><rect x="921" y="515.5" width="1" height="2.5" fill="#4a4a4a"/><rect x="930" y="515.5" width="1" height="2.5" fill="#4a4a4a"/><rect x="938" y="515.5" width="1" height="2.5" fill="#4a4a4a"/><rect x="947" y="514" width="1.5" height="5" fill="#777"/><rect x="955" y="515.5" width="1" height="2.5" fill="#4a4a4a"/><rect x="964" y="515.5" width="1" height="2.5" fill="#4a4a4a"/><rect x="967" y="514" width="1.5" height="5" fill="#777"/></svg>
<div class="t" style="left:300.92px;top:520.72px;font-size:8.6px;line-height:8.6px;color:#e0e0e0;font-weight:700;letter-spacing:0.000px;">0.0</div>
<div class="t" style="left:343.58px;top:520.72px;font-size:8.6px;line-height:8.6px;color:#e0e0e0;font-weight:700;letter-spacing:0.000px;">1.0</div>
<div class="t" style="left:386.24px;top:520.72px;font-size:8.6px;line-height:8.6px;color:#e0e0e0;font-weight:700;letter-spacing:0.000px;">2.0</div>
<div class="t" style="left:428.9px;top:520.72px;font-size:8.6px;line-height:8.6px;color:#e0e0e0;font-weight:700;letter-spacing:0.000px;">3.0</div>
<div class="t" style="left:471.56px;top:520.72px;font-size:8.6px;line-height:8.6px;color:#e0e0e0;font-weight:700;letter-spacing:0.000px;">4.0</div>
<div class="t" style="left:514.22px;top:520.72px;font-size:8.6px;line-height:8.6px;color:#e0e0e0;font-weight:700;letter-spacing:0.000px;">5.0</div>
<div class="t" style="left:556.88px;top:520.72px;font-size:8.6px;line-height:8.6px;color:#e0e0e0;font-weight:700;letter-spacing:0.000px;">6.0</div>
<div class="t" style="left:599.54px;top:520.72px;font-size:8.6px;line-height:8.6px;color:#e0e0e0;font-weight:700;letter-spacing:0.000px;">7.0</div>
<div class="t" style="left:642.2px;top:520.72px;font-size:8.6px;line-height:8.6px;color:#e0e0e0;font-weight:700;letter-spacing:0.000px;">8.0</div>
<div class="t" style="left:684.86px;top:520.72px;font-size:8.6px;line-height:8.6px;color:#e0e0e0;font-weight:700;letter-spacing:0.000px;">9.0</div>
<div class="t" style="left:725.13px;top:520.72px;font-size:8.6px;line-height:8.6px;color:#e0e0e0;font-weight:700;letter-spacing:0.000px;">10.0</div>
<div class="t" style="left:768.03px;top:520.72px;font-size:8.6px;line-height:8.6px;color:#e0e0e0;font-weight:700;letter-spacing:0.000px;">11.0</div>
<div class="t" style="left:810.45px;top:520.72px;font-size:8.6px;line-height:8.6px;color:#e0e0e0;font-weight:700;letter-spacing:0.000px;">12.0</div>
<div class="t" style="left:853.11px;top:520.72px;font-size:8.6px;line-height:8.6px;color:#e0e0e0;font-weight:700;letter-spacing:0.000px;">13.0</div>
<div class="t" style="left:895.77px;top:520.72px;font-size:8.6px;line-height:8.6px;color:#e0e0e0;font-weight:700;letter-spacing:0.000px;">14.0</div>
<div class="t" style="left:955px;top:520.72px;font-size:8.6px;line-height:8.6px;color:#e0e0e0;font-weight:700;letter-spacing:0.000px;">15.480</div>
<div class="t" style="left:299.6px;top:536.72px;font-size:8.6px;line-height:8.6px;color:#8f8f8f;font-weight:400;letter-spacing:0.176px;">0.000</div>
<div style="left:330px;top:536px;width:550px;height:12px;background:#5a5a5a;border-radius:2px;"></div>
<div style="left:330px;top:536px;width:8px;height:12px;background:#444444;border-radius:2px 0 0 2px;"></div>
<div style="left:872px;top:536px;width:8px;height:12px;background:#444444;border-radius:0 2px 2px 0;"></div>
<svg style="left:331px;top:538px" width="6" height="8" viewBox="0 0 6 8"><path d="M5 1L1.5 4L5 7Z" fill="#9a9a9a"/></svg>
<svg style="left:874px;top:538px" width="6" height="8" viewBox="0 0 6 8"><path d="M1 1L4.5 4L1 7Z" fill="#bdbdbd"/></svg>
<div class="t" style="left:345px;top:536.85px;font-size:8.8px;line-height:8.8px;color:#f4f4f4;font-weight:400;letter-spacing:-0.004px;-webkit-text-stroke:0.35px #f4f4f4;">0.000</div>
<div style="left:349px;top:536px;width:1.3px;height:12px;background:#ffffff;"></div>
<div class="t" style="right:441.5px;top:537.05px;font-size:8.8px;line-height:8.8px;color:#f0f0f0;font-weight:400;letter-spacing:0.000px;letter-spacing:0.1px;-webkit-text-stroke:0.25px #f0f0f0;">15.480</div>
<div class="t" style="left:888.5px;top:536.72px;font-size:8.6px;line-height:8.6px;color:#8f8f8f;font-weight:400;letter-spacing:-0.051px;">15.480</div>
<svg style="left:923px;top:537px" width="14" height="11" viewBox="0 0 14 11"><path d="M1 1V10M13 1V10M3.8 3L6.3 5.5L3.8 8M10.2 3L7.7 5.5L10.2 8" stroke="#777" stroke-width="0.9" fill="none"/></svg>
<svg style="left:946px;top:535px" width="15" height="15" viewBox="0 0 24 24"><path d="M3 12a9 9 0 1 0 9-9 9.75 9.75 0 0 0-6.74 2.74L3 8" stroke="#6e6e6e" stroke-width="1.5" fill="none"/><path d="M3 3v5h5" stroke="#6e6e6e" stroke-width="1.5" fill="none" transform="rotate(10 3 8)"/></svg>
<div style="left:329px;top:404px;width:2px;height:110px;background:#f5f5f5;"></div>
<svg style="left:318px;top:505px" width="24" height="22" viewBox="0 0 24 22"><circle cx="12" cy="12" r="6.5" fill="#1b1b1b"/><path d="M7.5 7H16.5V10L12 15L7.5 10Z" fill="#c8c8c8"/><path d="M12 9.5V14.5" stroke="#555" stroke-width="0.9"/></svg>
<div style="left:329px;top:404px;width:2px;height:109px;background:#f5f5f5;"></div>
<div style="left:980px;top:506px;width:323px;height:47px;background:#2b2b2b;"></div>
<div style="left:980px;top:553px;width:324px;height:1px;background:#383838;"></div>
<div style="left:1303px;top:85px;width:1px;height:468px;background:#353535;"></div>
</body></html>
